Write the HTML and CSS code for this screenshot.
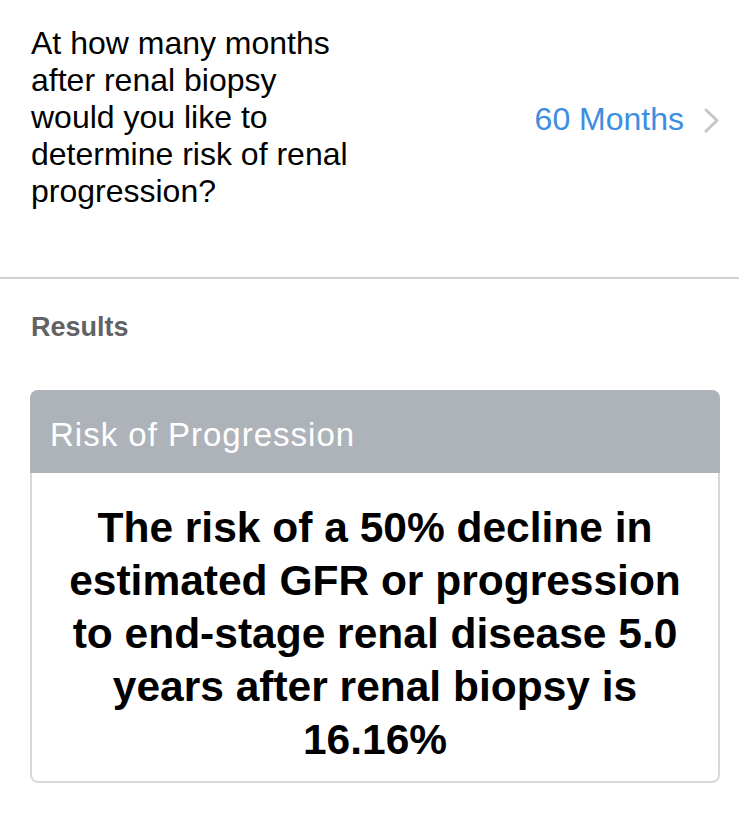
FILE: index.html
```html
<!DOCTYPE html>
<html>
<head>
<meta charset="utf-8">
<link rel="stylesheet" href="styles.css">
</head>
<body>
<div class="row">
  <div class="question">At how many months after renal biopsy would you like to determine risk of renal progression?</div>
  <div class="value">
    <span class="value-text">60 Months</span>
    <svg class="chevron" width="15" height="25" viewBox="0 0 15 25"><polyline points="2,2 13,12.5 2,23" fill="none" stroke="#c5c5ca" stroke-width="3" stroke-linecap="round" stroke-linejoin="round"/></svg>
  </div>
</div>
<div class="divider"></div>
<div class="section-title">Results</div>
<div class="card">
  <div class="card-header">Risk of Progression</div>
  <div class="card-body">The risk of a 50% decline in estimated GFR or progression to end-stage renal disease 5.0 years after renal biopsy is 16.16%</div>
</div>
</body>
</html>
```
FILE: styles.css
```css
html, body {
  margin: 0;
  padding: 0;
  background: #ffffff;
}
body {
  font-family: "Liberation Sans", Arial, sans-serif;
  color: #000;
  width: 739px;
  height: 825px;
  overflow: hidden;
}
.row {
  display: flex;
  align-items: center;
  justify-content: space-between;
  padding: 25px 20px 67px 31px;
}
.question {
  width: 325px;
  font-size: 32px;
  line-height: 37px;
}
.value {
  display: flex;
  align-items: center;
  gap: 20px;
  margin-top: 3px;
}
.value-text {
  font-size: 32px;
  line-height: 37px;
  color: #3d8ee0;
}
.chevron {
  display: block;
  margin-top: 2px;
}
.divider {
  height: 2px;
  background: #d0d0d0;
}
.section-title {
  margin: 32px 0 0 31px;
  font-size: 27px;
  line-height: 32px;
  font-weight: bold;
  color: #626264;
}
.card {
  margin: 47px 19px 0 30px;
}
.card-header {
  background: #adb3b9;
  color: #ffffff;
  height: 77px;
  line-height: 77px;
  padding-top: 6px;
  font-size: 33px;
  letter-spacing: 1px;
  padding-left: 20px;
  border-radius: 8px 8px 0 0;
}
.card-body {
  border: 2px solid #d8d8d8;
  border-top: none;
  border-radius: 0 0 8px 8px;
  padding: 28px 20px 15px;
  text-align: center;
  font-size: 42.5px;
  line-height: 53px;
  font-weight: bold;
}
```
